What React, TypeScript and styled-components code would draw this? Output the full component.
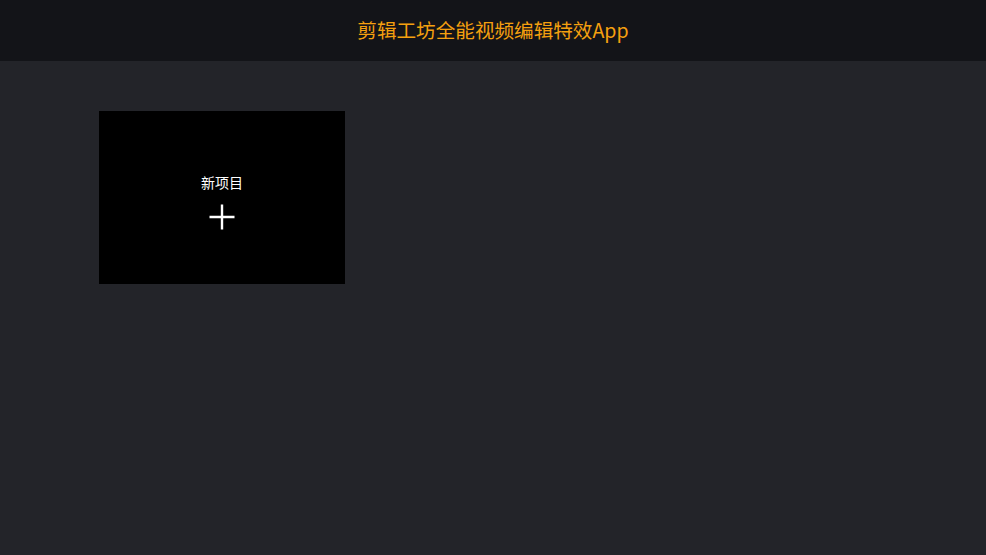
import React from 'react';
import styled, { createGlobalStyle } from 'styled-components';

const GlobalStyle = createGlobalStyle`
  html, body {
    margin: 0;
    padding: 0;
    background: #232429;
    font-family: "Noto Sans", "Noto Sans CJK SC", sans-serif;
  }
  #root {
    min-height: 100vh;
  }
`;

const Page = styled.div`
  min-height: 100vh;
  background: #232429;
  display: flex;
  flex-direction: column;
`;

const Header = styled.header`
  height: 61px;
  background: #131418;
  display: flex;
  align-items: center;
  justify-content: center;
`;

const Title = styled.h1`
  margin: 0;
  font-size: 19.6px;
  font-weight: 400;
  color: #f5a00f;
  font-family: "Noto Sans CJK SC", "Noto Sans", sans-serif;
  transform: translateY(-1px);
`;

const Projects = styled.section`
  display: flex;
  flex-wrap: wrap;
  gap: 20px;
  padding: 50px 99px;
`;

const NewCard = styled.button`
  width: 246px;
  height: 173px;
  background: #000;
  border: none;
  cursor: pointer;
  display: flex;
  flex-direction: column;
  align-items: center;
  justify-content: center;
  gap: 12px;
  padding: 6px 0 0;
  color: #fff;
`;

const CardLabel = styled.span`
  font-size: 14px;
  line-height: 20px;
  font-family: "Noto Sans CJK SC", "Noto Sans", sans-serif;
`;

const Plus = () => (
  <svg width="26" height="26" viewBox="0 0 26 26">
    <path d="M13 0.5v25M0.5 13h25" stroke="#fff" strokeWidth="2.4" />
  </svg>
);

export default function App() {
  return (
    <Page>
      <GlobalStyle />
      <Header>
        <Title>剪辑工坊全能视频编辑特效App</Title>
      </Header>
      <Projects>
        <NewCard>
          <CardLabel>新项目</CardLabel>
          <Plus />
        </NewCard>
      </Projects>
    </Page>
  );
}
